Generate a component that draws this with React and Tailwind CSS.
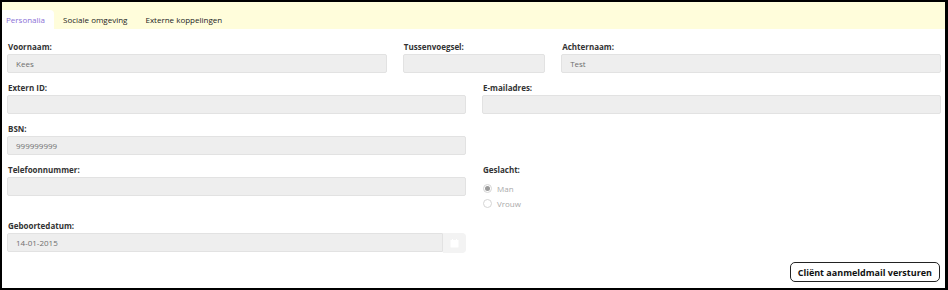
import React from "react";

const Label = ({ children }) => (
  <div className="h-[15px] text-[8px] leading-[15px] font-bold text-[#333] pl-[1px]">{children}</div>
);

const Input = ({ value }) => (
  <div className="h-[19px] bg-[#eeeeee] border border-[#e2e2e2] rounded-[2px] text-[8px] leading-[17px] text-[#6f6f6f] pl-[8px]">
    {value}
  </div>
);

const Field = ({ label, value, className = "" }) => (
  <div className={`mb-[7px] ${className}`}>
    <Label>{label}</Label>
    <Input value={value} />
  </div>
);

const Radio = ({ checked, label }) => (
  <div className="h-[15px] flex items-center gap-[5px] pl-[1px]">
    <div className="w-[9px] h-[9px] rounded-full border border-[#d5d5d5] bg-white flex items-center justify-center">
      {checked && <div className="w-[5px] h-[5px] rounded-full bg-[#9a9a9a]" />}
    </div>
    <span className="text-[8px] text-[#aaa]">{label}</span>
  </div>
);

export default function App() {
  return (
    <div
      className="w-[948px] h-[290px] border-2 border-r-[3px] border-black bg-white flex flex-col overflow-hidden"
      style={{ fontFamily: '"Open Sans", "Liberation Sans", sans-serif' }}
    >
      <div className="h-[27px] bg-[#fffddb] flex items-end text-[8px] shrink-0">
        <div className="h-[19px] bg-white rounded-tr-[4px] pl-[4px] pr-[9px] flex items-center text-[#8a70d6]">
          Personalia
        </div>
        <div className="h-[19px] px-[9px] flex items-center text-[#222]">Sociale omgeving</div>
        <div className="h-[19px] px-[9px] flex items-center text-[#222]">Externe koppelingen</div>
      </div>
      <div className="flex-1 pl-[5px] pr-[4px] pt-[10px] flex flex-col border-l border-[#e6e6e6] -ml-px">
        <div className="grid grid-cols-12 gap-x-4 items-start">
          <Field className="col-span-5" label="Voornaam:" value="Kees" />
          <Field className="col-span-2" label="Tussenvoegsel:" value="" />
          <Field className="col-span-5" label="Achternaam:" value="Test" />
          <Field className="col-span-6" label="Extern ID:" value="" />
          <Field className="col-span-6" label="E-mailadres:" value="" />
          <Field className="col-span-6" label="BSN:" value="999999999" />
          <div className="col-span-6" />
          <Field className="col-span-6" label="Telefoonnummer:" value="" />
          <div className="col-span-6 mb-[7px]">
            <Label>Geslacht:</Label>
            <div className="pt-[4px]">
              <Radio checked label="Man" />
              <Radio label="Vrouw" />
            </div>
          </div>
          <div className="col-span-6 mb-[7px]">
            <Label>Geboortedatum:</Label>
            <div className="flex">
              <div className="flex-1 h-[19px] bg-[#eeeeee] border border-[#e2e2e2] rounded-l-[2px] text-[8px] leading-[17px] text-[#6f6f6f] pl-[8px]">
                14-01-2015
              </div>
              <div className="w-[23px] h-[20px] bg-[#f3f3f3] rounded-r-[4px] flex items-center justify-center">
                <svg width="9" height="9" viewBox="0 0 9 9">
                  <rect x="0.5" y="1" width="8" height="7.5" rx="0.5" fill="#ffffff" />
                  <rect x="2" y="0" width="1" height="2" fill="#ffffff" />
                  <rect x="6" y="0" width="1" height="2" fill="#ffffff" />
                </svg>
              </div>
            </div>
          </div>
        </div>
        <div className="flex justify-end mt-[2px] pr-[1px]">
          <button className="h-[20px] px-[7px] border-[1.5px] border-[#222] rounded-[5px] bg-white text-[9px] font-bold text-[#111] leading-none">
            Cliënt aanmeldmail versturen
          </button>
        </div>
      </div>
    </div>
  );
}
